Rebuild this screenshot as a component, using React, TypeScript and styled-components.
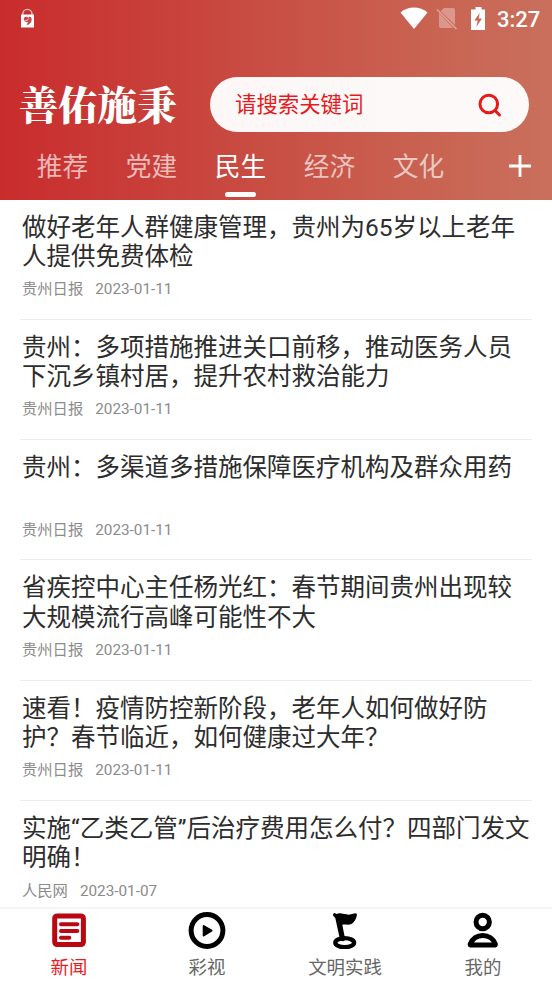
import React from 'react';
import styled, { createGlobalStyle } from 'styled-components';

const GlobalStyle = createGlobalStyle`
  * { box-sizing: border-box; }
  body {
    margin: 0;
    background: #fff;
    font-family: Roboto, "Noto Sans CJK SC", sans-serif;
    overflow: hidden;
  }
  svg { display: block; flex: none; }
`;

const Screen = styled.div`
  width: 552px;
  height: 983px;
  display: flex;
  flex-direction: column;
  overflow: hidden;
  background: #fff;
`;

const Header = styled.header`
  flex: none;
  height: 199.6px;
  display: flex;
  flex-direction: column;
  color: #fff;
  background: linear-gradient(90deg, #c92c2c 0%, #c8483f 40%, #c95e4e 70%, #c9705c 100%);
`;

const StatusBar = styled.div`
  height: 77px;
  display: flex;
  justify-content: space-between;
  padding: 7px 12px 0 20px;
`;

const StatusIcons = styled.div`
  display: flex;
  height: 25px;
`;

const Clock = styled.span`
  margin-left: 11px;
  width: 43px;
  font-size: 22px;
  font-weight: 500;
  line-height: 25px;
  white-space: nowrap;
`;

const SearchRow = styled.div`
  height: 55px;
  display: flex;
  padding: 0 23px 0 19px;
`;

const Brand = styled.h1`
  margin: 0;
  width: 191px;
  font-family: "Noto Serif CJK SC", "Noto Sans CJK SC", serif;
  font-size: 39.3px;
  font-weight: 900;
  line-height: 52px;
  white-space: nowrap;
`;

const SearchBox = styled.div`
  flex: 1;
  display: flex;
  align-items: center;
  justify-content: space-between;
  padding: 1px 27px 0 25px;
  border-radius: 28px;
  background: rgba(255, 255, 255, 0.96);
  color: #e6191c;
  font-size: 21.4px;
  line-height: 30px;
`;

const TabBar = styled.nav`
  flex: 1;
  display: flex;
  padding: 0 20px 0 18px;
  justify-content: space-between;
`;

const Tabs = styled.div`
  display: flex;
`;

const Tab = styled.div<{ $active?: boolean }>`
  width: 89px;
  display: flex;
  flex-direction: column;
  align-items: center;
  font-size: 25.7px;
  line-height: 38px;
  padding-top: 16px;
  color: ${(p) => (p.$active ? '#fff' : 'rgba(255, 255, 255, 0.66)')};

  &::after {
    content: '';
    width: 31px;
    height: 5px;
    margin-top: 6px;
    border-radius: 3px;
    background: ${(p) => (p.$active ? '#fff' : 'transparent')};
  }
`;

const AddIcon = styled.svg`
  margin-top: 22px;
`;

const Feed = styled.main`
  flex: 1;
  min-height: 0;
  overflow: hidden;
  padding: 0 20px;
`;

const Article = styled.article`
  height: 120.3px;
  padding: 13px 0 0 2px;
  border-bottom: 1px solid #ebebeb;
`;

const Title = styled.h2`
  margin: 0;
  height: 59px;
  font-size: 24.5px;
  font-weight: 400;
  line-height: 29.4px;
  color: #2d2d2d;
`;

const Meta = styled.div`
  display: flex;
  gap: 12px;
  margin-top: 6.5px;
  font-size: 15.3px;
  line-height: 22px;
  color: #8b8b8b;
`;

const BottomBar = styled.nav`
  flex: none;
  height: 76px;
  display: grid;
  grid-template-columns: repeat(4, 138px);
  background: #fff;
  border-top: 2px solid #f5f5f5;
`;

const NavItem = styled.div<{ $active?: boolean }>`
  display: flex;
  flex-direction: column;
  align-items: center;
  font-size: 18.4px;
  line-height: 26px;
  color: ${(p) => (p.$active ? '#e81c1f' : '#666')};

  svg { margin: 2px 0 6px; }
`;

const LockBagIcon = () => (
  <svg width="15" height="21" viewBox="0 0 15 21">
    <path d="M2.800 8V7a4.600 4.600 0 0 1 9.200 0v1" fill="none" stroke="#f0c4c2" strokeWidth="1.400" />
    <path d="M1 7.500h13v13H1z" fill="#fff" />
    <path d="M3.700 12.500c-.2-2.300 2-3.400 3.500-2.400l.9.700c.6-1.300 2-1.500 3-.5 1.600 3-.2 6.200-3.200 7.700l-1.400-.5 1.800-2.300c-2.300.3-4.200-.7-4.600-2.700z" fill="#c8474a" />
    <path d="M4.500 13.500c1.700.6 3.600-.3 4.200-2" fill="none" stroke="#fff" strokeWidth=".7" />
  </svg>
);

const WifiIcon = () => (
  <svg width="28" height="25" viewBox="0 0 28 25">
    <path d="M.5 5.500C4.500 2 9 .4 14 .4s9.500 1.600 13.500 5.100L14 22z" fill="#fff" />
  </svg>
);

const NoSimIcon = () => (
  <svg width="43" height="25" viewBox="0 0 43 25">
    <path d="M16 1h9q2 0 2 2v15L12.700 4.200zM11 6v13q0 2 2 2h12.200z" fill="#fff" opacity=".33" />
    <path d="M9 2.500 28.500 22" stroke="#fff" strokeWidth="1.700" opacity=".4" />
  </svg>
);

const BatteryIcon = () => (
  <svg width="15" height="25" viewBox="0 0 15 25">
    <path d="M4.500 0h6v2.500H14V23H0V2.500h4.500z" fill="#fff" />
    <path d="M8.700 6 3.300 13.500h3.400L5.300 20l5.600-8.500H7.700z" fill="#c86655" />
  </svg>
);

const SearchIcon = () => (
  <svg width="25" height="25" viewBox="0 0 25 25" fill="none" stroke="#e6191c" strokeWidth="3">
    <circle cx="11.800" cy="11" r="8.800" />
    <path d="m18 17.500 4.500 4.500" strokeLinecap="round" />
  </svg>
);

const NewsIcon = () => (
  <svg width="38" height="38" viewBox="0 0 38 38" fill="none" stroke="#ba0711">
    <rect x="4.700" y="4.900" width="28.700" height="28.700" rx="2.500" strokeWidth="5" />
    <path d="M11 13.200h16.300M11 19.900h16.300M11 26.700h8.300" strokeWidth="4" strokeLinecap="round" />
  </svg>
);

const PlayIcon = () => (
  <svg width="38" height="38" viewBox="0 0 38 38">
    <circle cx="19" cy="19.500" r="15.900" fill="none" stroke="#000" strokeWidth="5" />
    <path d="m15.700 15 7.800 4.700-7.800 4.700z" fill="#000" stroke="#000" strokeWidth="2" strokeLinejoin="round" />
  </svg>
);

const FlagIcon = () => (
  <svg width="38" height="38" viewBox="0 0 38 38">
    <ellipse cx="18.700" cy="31.700" rx="9.400" ry="4.500" fill="none" stroke="#000" strokeWidth="4.300" />
    <path d="M7 4.500Q6.500 2.300 8.600 2.100l2 .9C14.500 1 20 4.300 24 3.500l5-1.300q2.200-.1 2 1.500c-.8 4-2.200 7-5.500 9.300-3.200 1.500-6.500-.1-9.200.8l2.800 14q.4 2-1.600 2.400-3 .1-3.600-2L9.300 7z" fill="#000" />
  </svg>
);

const PersonIcon = () => (
  <svg width="38" height="38" viewBox="0 0 38 38" fill="none" stroke="#000" strokeWidth="5">
    <circle cx="18.700" cy="11" r="6.700" />
    <path d="M6.500 34h24.600q.3 0 .2-1C29.500 27.800 24.500 24.500 18.800 24.500S8.500 27.800 6.300 33q-.3 1 .2 1z" strokeLinejoin="round" />
  </svg>
);

const tabs = ['推荐', '党建', '民生', '经济', '文化'];

const articles = [
  { title: '做好老年人群健康管理，贵州为65岁以上老年人提供免费体检', source: '贵州日报', date: '2023-01-11' },
  { title: '贵州：多项措施推进关口前移，推动医务人员下沉乡镇村居，提升农村救治能力', source: '贵州日报', date: '2023-01-11' },
  { title: '贵州：多渠道多措施保障医疗机构及群众用药', source: '贵州日报', date: '2023-01-11' },
  { title: '省疾控中心主任杨光红：春节期间贵州出现较大规模流行高峰可能性不大', source: '贵州日报', date: '2023-01-11' },
  { title: '速看！疫情防控新阶段，老年人如何做好防护？春节临近，如何健康过大年？', source: '贵州日报', date: '2023-01-11' },
  { title: '实施“乙类乙管”后治疗费用怎么付？四部门发文明确！', source: '人民网', date: '2023-01-07' },
];

const navItems = [
  { label: '新闻', Icon: NewsIcon },
  { label: '彩视', Icon: PlayIcon },
  { label: '文明实践', Icon: FlagIcon },
  { label: '我的', Icon: PersonIcon },
];

export default function App() {
  return (
    <Screen lang="zh-CN">
      <GlobalStyle />
      <Header>
        <StatusBar>
          <LockBagIcon />
          <StatusIcons>
            <WifiIcon />
            <NoSimIcon />
            <BatteryIcon />
            <Clock>3:27</Clock>
          </StatusIcons>
        </StatusBar>
        <SearchRow>
          <Brand>善佑施秉</Brand>
          <SearchBox>
            <span>请搜索关键词</span>
            <SearchIcon />
          </SearchBox>
        </SearchRow>
        <TabBar>
          <Tabs>
            {tabs.map((t) => (
              <Tab key={t} $active={t === '民生'}>{t}</Tab>
            ))}
          </Tabs>
          <AddIcon width="24" height="24" viewBox="0 0 24 24" stroke="#fff" strokeWidth="2.800">
            <path d="M12 1v22M1 12h22" />
          </AddIcon>
        </TabBar>
      </Header>
      <Feed>
        {articles.map((a) => (
          <Article key={a.title}>
            <Title>{a.title}</Title>
            <Meta>
              <span>{a.source}</span>
              <span>{a.date}</span>
            </Meta>
          </Article>
        ))}
      </Feed>
      <BottomBar>
        {navItems.map(({ label, Icon }) => (
          <NavItem key={label} $active={label === '新闻'}>
            <Icon />
            {label}
          </NavItem>
        ))}
      </BottomBar>
    </Screen>
  );
}
